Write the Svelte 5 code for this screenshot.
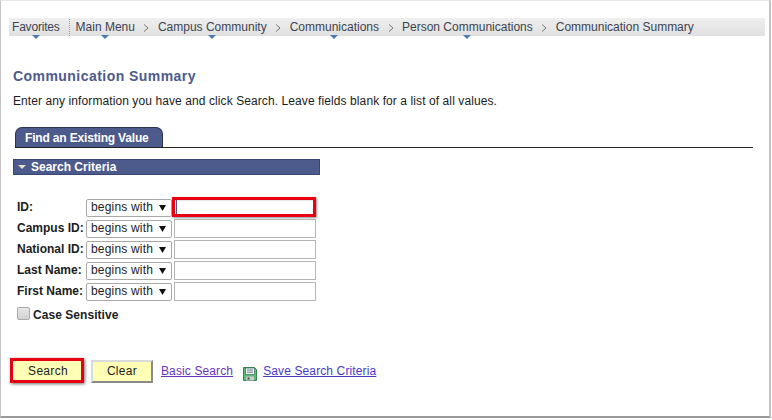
<script>
  const crumbs = [
    { label: 'Main Menu', caret: true },
    { label: 'Campus Community', caret: true },
    { label: 'Communications', caret: true },
    { label: 'Person Communications', caret: true },
    { label: 'Communication Summary', caret: false }
  ];
  const fields = ['ID:', 'Campus ID:', 'National ID:', 'Last Name:', 'First Name:'];
</script>

<div class="frame">
  <nav class="nav">
    <span class="crumb fav">Favorites<i class="caret"></i></span>
    <span class="dots"></span>
    {#each crumbs as c, i}
      {#if i > 0}<svg class="sep" width="6" height="8" viewBox="0 0 6 8"><path d="M1 .5 5 4 1 7.500" fill="none" stroke="#777" stroke-width="1"/></svg>{/if}
      <span class="crumb">{c.label}{#if c.caret}<i class="caret"></i>{/if}</span>
    {/each}
  </nav>

  <h1>Communication Summary</h1>
  <p class="hint">Enter any information you have and click Search. Leave fields blank for a list of all values.</p>

  <div class="tabline"><div class="tab">Find an Existing Value</div></div>

  <div class="section">
    <svg width="8" height="4" viewBox="0 0 8 4"><path d="M0 0h8L4 4z" fill="#e4e0cc"/></svg>
    <span>Search Criteria</span>
  </div>

  <div class="form">
    {#each fields as f, i}
      <div class="row">
        <label for={'f' + i}>{f}</label>
        <div class="select"><span>begins with</span><svg width="7" height="6" viewBox="0 0 7 6"><path d="M0 0h7L3.500 6z" fill="#111"/></svg></div>
        <div class="field" class:active={i === 0}>
          {#if i === 0}<span class="cursor"></span>{/if}
        </div>
      </div>
    {/each}
  </div>

  <div class="case"><span class="check"></span><span>Case Sensitive</span></div>

  <div class="actions">
    <button class="btn primary">Search</button>
    <button class="btn secondary">Clear</button>
    <a href="#basic" class="link basic">Basic Search</a>
    <svg class="disk" width="14" height="14" viewBox="0 0 14 14">
      <path d="M.5.5h11l2 2v11H.5z" fill="#5cbb78" stroke="#3a8055"/>
      <rect x="2.500" y="1" width="9" height="6.500" fill="#eef3f6" stroke="#3f6a55" stroke-width=".7"/>
      <path d="M4 3h6M4 5.200h6" stroke="#5c6b80" stroke-width=".9"/>
      <rect x="3" y="9.500" width="8" height="4" fill="#c9d0cb"/>
      <rect x="4.500" y="10.500" width="2" height="2" fill="#3e4650"/>
    </svg>
    <a href="#save" class="link">Save Search Criteria</a>
  </div>
</div>

<style>
  :global(body) {
    margin: 0;
    background: #fff;
  }
  .frame {
    box-sizing: border-box;
    width: 771px;
    height: 418px;
    padding: 17px 0 0 8px;
    background: #fff;
    border-left: 1px solid #c4c4c4;
    border-right: 2px solid #c4c4c4;
    border-top: 1px solid #e6e6e6;
    border-bottom: 2px solid #9a9a9a;
    font-family: "Liberation Sans", Arial, sans-serif;
    overflow: hidden;
  }
  .nav {
    display: flex;
    align-items: center;
    width: 756px;
    height: 18px;
    box-sizing: border-box;
    padding-left: 3px;
    background: linear-gradient(#efefef, #e0e0e0);
    font-size: 12px;
    color: #3d4450;
  }
  .crumb {
    position: relative;
    white-space: nowrap;
  }
  .fav {
    letter-spacing: -.2px;
  }
  .caret {
    position: absolute;
    left: 50%;
    bottom: -5px;
    margin-left: -4px;
    border-left: 4px solid transparent;
    border-right: 4px solid transparent;
    border-top: 4px solid #4a7ab5;
  }
  .dots {
    width: 0;
    height: 17px;
    margin: 0 6px 0 9px;
    border-left: 1px dotted #999;
  }
  .sep {
    margin: 1px 8.500px 0 8.500px;
  }
  h1 {
    margin: 32px 0 0 4px;
    font-size: 14px;
    line-height: 17px;
    font-weight: bold;
    letter-spacing: .45px;
    color: #4d5a8c;
  }
  .hint {
    margin: 9px 0 0 4px;
    font-size: 12px;
    line-height: 14px;
    letter-spacing: .09px;
    color: #1c1c1c;
  }
  .tabline {
    margin: 19px 0 0 6px;
    width: 738px;
    border-bottom: 1px solid #222;
  }
  .tab {
    box-sizing: border-box;
    width: 148px;
    height: 20px;
    padding: 3px 0 0 9px;
    background: #4d5a8c;
    border: 1px solid #2b3355;
    border-bottom: 0;
    border-radius: 7px 7px 0 0;
    color: #fff;
    font-size: 12px;
    font-weight: bold;
    letter-spacing: -.17px;
    line-height: 14px;
  }
  .section {
    display: flex;
    align-items: center;
    gap: 5px;
    box-sizing: border-box;
    width: 307px;
    height: 16px;
    margin: 11px 0 0 4px;
    padding-left: 4px;
    background: #4d5a8c;
    border: 1px solid #3a4570;
    color: #fff;
    font-size: 12px;
    font-weight: bold;
  }
  .form {
    margin: 23px 0 0 8px;
    display: flex;
    flex-direction: column;
    gap: 2px;
  }
  .row {
    display: flex;
    align-items: center;
    height: 19px;
  }
  label {
    width: 69px;
    padding-bottom: 2px;
    font-size: 12px;
    font-weight: bold;
    color: #1c1c1c;
    white-space: nowrap;
  }
  .select {
    display: flex;
    align-items: center;
    justify-content: space-between;
    box-sizing: border-box;
    width: 86px;
    height: 18px;
    padding: 0 5px 0 4px;
    background: #fff;
    border: 1px solid #a9a9a9;
    border-radius: 2px;
    font-size: 12px;
    letter-spacing: .18px;
    color: #222;
  }
  .select span {
    margin-top: -1px;
  }
  .field {
    box-sizing: border-box;
    width: 142px;
    height: 19px;
    margin-left: 2px;
    background: #fff;
    border: 1px solid #b5b5b5;
    position: relative;
  }
  .field.active {
    border-color: transparent;
    box-shadow: inset 0 2px 2px -1px #a8a8a8;
  }
  .field.active::after {
    content: "";
    position: absolute;
    inset: -2px -1px -1px -3px;
    border: 3px solid #e60012;
    box-shadow: 1px 1px 2px rgba(0, 0, 0, .45);
  }
  .cursor {
    position: absolute;
    left: 1px;
    top: 1px;
    width: 1px;
    height: 15px;
    background: #3a5a8c;
  }
  .case {
    display: flex;
    align-items: center;
    gap: 3px;
    margin: 6px 0 0 8px;
    height: 16px;
    font-size: 12px;
    font-weight: bold;
    letter-spacing: .05px;
    color: #222;
  }
  .check {
    width: 11px;
    height: 11px;
    margin-bottom: 3px;
    border: 1px solid #aaa;
    border-radius: 2px;
    background: linear-gradient(#e8e8e8, #d2d2d2);
  }
  .actions {
    display: flex;
    align-items: center;
    margin: 35px 0 0 1px;
  }
  .btn {
    box-sizing: border-box;
    width: 62px;
    height: 23px;
    padding: 0;
    background: #ffffb5;
    border: 2px solid;
    border-color: #dadada #8a8a8a #8a8a8a #dadada;
    font: 12px "Liberation Sans", Arial, sans-serif;
    letter-spacing: .3px;
    color: #222;
  }
  .primary {
    width: 74px;
    height: 25px;
    margin-right: 7px;
    padding-left: 2px;
    border: 3px solid #e60012;
    box-shadow: 1px 1px 3px rgba(0, 0, 0, .55);
  }
  .secondary {
    margin-top: 2px;
    padding-bottom: 2px;
  }
  .link {
    font-size: 12px;
    letter-spacing: .12px;
    color: #4b3ac8;
    text-decoration: underline;
  }
  .basic {
    margin-left: 8px;
    color: #6a35c0;
  }
  .disk {
    margin: 6px 6px 0 10px;
  }
</style>
